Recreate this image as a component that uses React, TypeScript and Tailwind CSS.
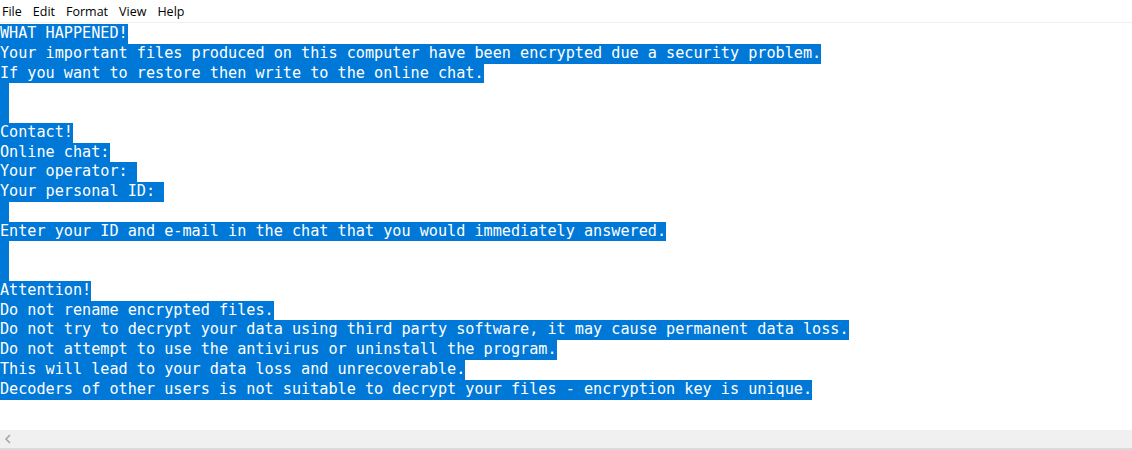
const lines = [
  'WHAT HAPPENED!',
  'Your important files produced on this computer have been encrypted due a security problem.',
  'If you want to restore then write to the online chat.',
  ' ',
  ' ',
  'Contact!',
  'Online chat:',
  'Your operator: ',
  'Your personal ID: ',
  ' ',
  'Enter your ID and e-mail in the chat that you would immediately answered.',
  ' ',
  ' ',
  'Attention!',
  'Do not rename encrypted files.',
  'Do not try to decrypt your data using third party software, it may cause permanent data loss.',
  'Do not attempt to use the antivirus or uninstall the program.',
  'This will lead to your data loss and unrecoverable.',
  'Decoders of other users is not suitable to decrypt your files - encryption key is unique.',
]

const menu = ['File', 'Edit', 'Format', 'View', 'Help']

export default function App() {
  return (
    <div className="h-[450px] w-full flex flex-col bg-white overflow-hidden">
      {/* Menu bar */}
      <div className="h-[23px] flex items-start pt-[3px] gap-[11px] pl-[2px] text-[12.5px] leading-[18px] text-black border-b border-[#f0f0f0]" style={{ fontFamily: '"Open Sans", "Noto Sans", sans-serif' }}>
        {menu.map((m) => (
          <span key={m}>{m}</span>
        ))}
      </div>

      {/* Text area */}
      <div className="flex-1 pt-[1px] text-[15.17px] leading-[19.78px] text-white whitespace-pre" style={{ fontFamily: '"DejaVu Sans Mono", "Liberation Mono", monospace' }}>
        {lines.map((line, i) => (
          <div key={i} className="h-[19.78px]">
            <span className="bg-[#0078d7] inline-block h-[19.78px]">{line}</span>
          </div>
        ))}
      </div>

      {/* Horizontal scrollbar */}
      <div className="h-[20px] bg-[#f0f0f0] border-b-2 border-[#dadada] flex items-center pl-[4px]">
        <svg width="8" height="10" viewBox="0 0 8 10">
          <path d="M6 1 L2 5 L6 9" fill="none" stroke="#a3a3a3" strokeWidth="1.5" />
        </svg>
      </div>
    </div>
  )
}
